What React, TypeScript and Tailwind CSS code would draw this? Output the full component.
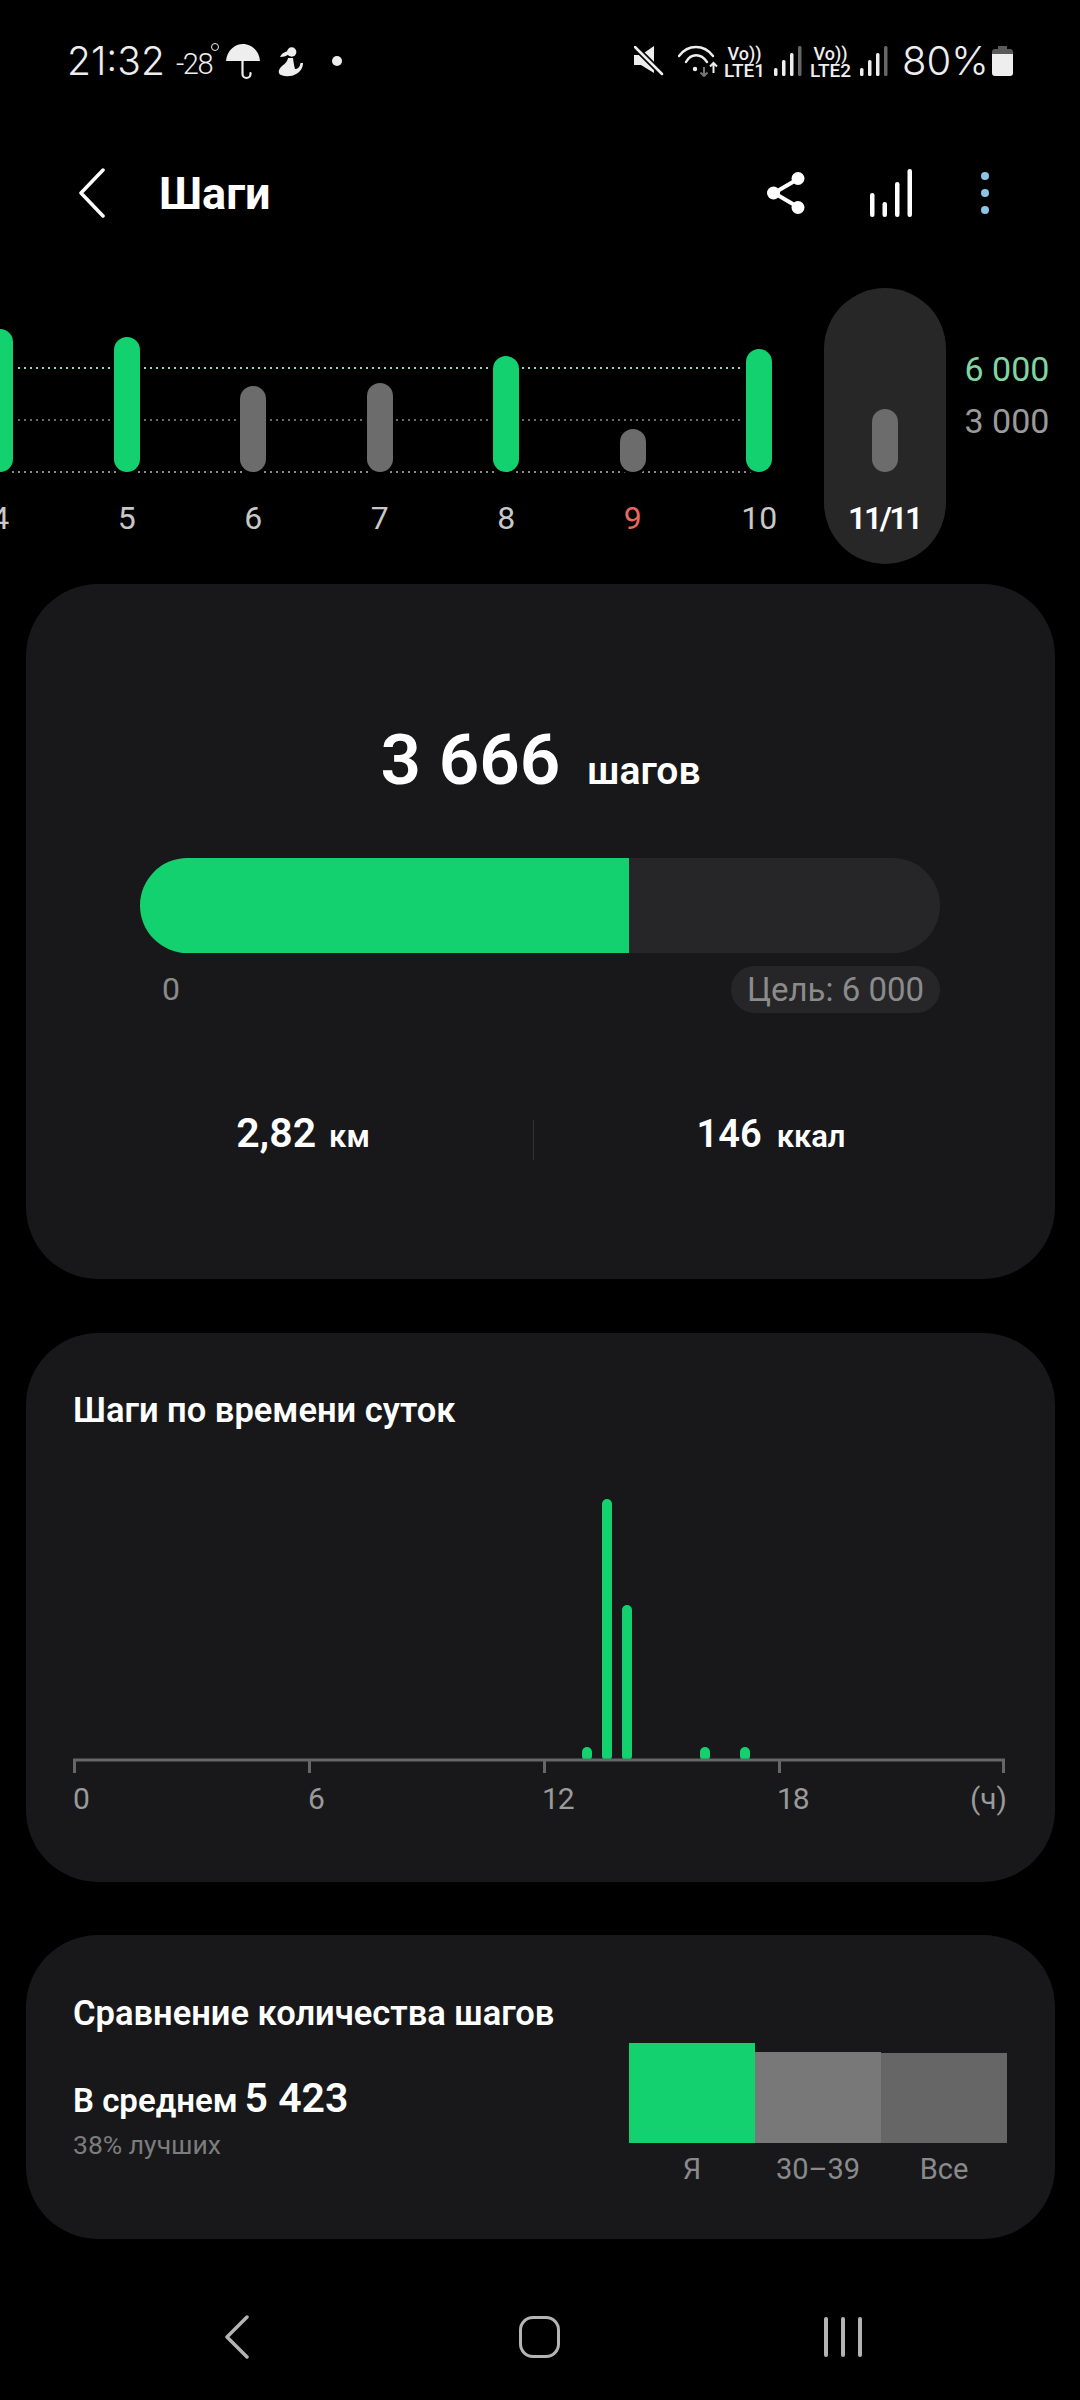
const days = [
  { label: "4", height: 143, color: "bg-[#12d16e]" },
  { label: "5", height: 135, color: "bg-[#12d16e]" },
  { label: "6", height: 86, color: "bg-[#6c6c6c]" },
  { label: "7", height: 89, color: "bg-[#6c6c6c]" },
  { label: "8", height: 116, color: "bg-[#12d16e]" },
  { label: "9", height: 43, color: "bg-[#6c6c6c]", red: true },
  { label: "10", height: 123, color: "bg-[#12d16e]" },
];

const hourBars = [
  { x: 514, top: 0 },
  { x: 534, top: -248 },
  { x: 554, top: -142 },
  { x: 632, top: 0 },
  { x: 672, top: 0 },
];

function Signal() {
  return (
    <svg width="28" height="30" viewBox="0 0 28 30" className="shrink-0">
      <rect x="0" y="22" width="3.5" height="8" rx="1.5" fill="#eee" />
      <rect x="8" y="14" width="3.5" height="16" rx="1.5" fill="#eee" />
      <rect x="16" y="7" width="3.5" height="23" rx="1.5" fill="#eee" />
      <rect x="24" y="0" width="3.5" height="30" rx="1.5" fill="#666" />
    </svg>
  );
}

function Volte({ sim }: { sim: string }) {
  return (
    <div className="flex w-[41px] flex-col items-center text-[#eee]">
      <span className="h-[17px] text-[18px] leading-[17px] font-medium">Vo))</span>
      <span className="mt-[1px] text-[19px] leading-[15px] font-medium">LTE{sim}</span>
    </div>
  );
}

function StatusBar() {
  return (
    <div className="flex h-[122px] items-center justify-between pr-[67px] pl-[67px] text-[#eee]">
      <div className="flex items-center">
        <span className="w-[100px] text-[39px] leading-[44px] font-light font-['Inter',sans-serif]">21:32</span>
        <span className="mt-[6px] ml-[9px] w-[38px] text-[29px] leading-[32px] font-light tracking-[-1.5px]">-28</span>
        <span className="mb-[28px] ml-[-3px] h-[8px] w-[8px] rounded-full border border-[#eee]" />
        <svg width="34" height="36" viewBox="0 0 34 36" className="mt-[2px] ml-[7px]">
          <path d="M0 17C1 6 9 0 17 0S33 6 34 17Z" fill="#eee" />
          <path d="M16.5 15V30a4 4 0 0 0 8 0V29" fill="none" stroke="#eee" strokeWidth="2.2" strokeLinecap="round" />
        </svg>
        <svg width="26" height="30" viewBox="0 0 26 30" className="mt-[2px] ml-[18px]">
          <circle cx="13.7" cy="5" r="4.7" fill="#eee" />
          <path d="M10 4C6 5 3 7 2 10C6 10 9 9 11 7Z" fill="#eee" />
          <path d="M10 11C9 16 6 17 3 20C0 23 0 27 3 28C8 30 14 29.5 18 27C22 25 25 21 25 16L22.5 16C22 20 20 22 17 22C16 18 15.5 15 15 11Z" fill="#eee" />
        </svg>
        <span className="ml-[28px] h-[10px] w-[10px] rounded-full bg-[#eee]" />
      </div>

      <div className="flex items-center">
        <svg width="30" height="30" viewBox="0 0 30 30">
          <path d="M0 9H7L20 0V27L7 19H0Z" fill="#eee" />
          <path d="M0 0L29 29" stroke="#000" strokeWidth="6" />
          <path d="M1 1L28 28" stroke="#eee" strokeWidth="2.5" strokeLinecap="round" />
        </svg>
        <svg width="40" height="32" viewBox="0 0 40 32" className="ml-[14px]">
          <path d="M1 11C10 -1 26 -1 35 11" fill="none" stroke="#eee" strokeWidth="2.4" strokeLinecap="round" />
          <path d="M8 17C13 8 23 8 29 17" fill="none" stroke="#eee" strokeWidth="2.4" strokeLinecap="round" />
          <circle cx="17" cy="24" r="2.2" fill="#eee" />
          <path d="M26 22V31M22.5 27.5L26 31L29.5 27.5" fill="none" stroke="#777" strokeWidth="2" />
          <path d="M35.5 28V18M32 21.5L35.5 18L39 21.5" fill="none" stroke="#eee" strokeWidth="2" />
        </svg>
        <div className="ml-[6px]">
          <Volte sim="1" />
        </div>
        <div className="ml-[9px]">
          <Signal />
        </div>
        <div className="ml-[8px]">
          <Volte sim="2" />
        </div>
        <div className="ml-[9px]">
          <Signal />
        </div>
        <span className="ml-[14px] w-[86px] text-[40px] leading-[44px] font-light font-['Inter',sans-serif]">80%</span>
        <svg width="21" height="30" viewBox="0 0 21 30" className="ml-[4px]">
          <path d="M6 0H15V3H18Q21 3 21 6V8H0V6Q0 3 3 3H6Z" fill="#5a5a5a" />
          <path d="M0 8H21V27Q21 30 18 30H3Q0 30 0 27Z" fill="#eee" />
        </svg>
      </div>
    </div>
  );
}

function Header() {
  return (
    <div className="flex h-[142px] items-center pr-[90px] pl-[79px]">
      <svg width="26" height="50" viewBox="0 0 26 50">
        <path d="M24 2L2 25L24 48" fill="none" stroke="#fff" strokeWidth="3.5" strokeLinecap="round" strokeLinejoin="round" />
      </svg>
      <h1 className="mt-[2px] ml-[54px] flex-1 text-[45px] leading-[50px] font-bold text-white">Шаги</h1>
      <svg width="38" height="42" viewBox="0 0 38 42">
        <path d="M31 7L7 21L31 35" fill="none" stroke="#fff" strokeWidth="4" />
        <circle cx="31" cy="6.5" r="6.5" fill="#fff" />
        <circle cx="6.5" cy="21" r="6.5" fill="#fff" />
        <circle cx="31" cy="35.5" r="6.5" fill="#fff" />
      </svg>
      <svg width="42" height="48" viewBox="0 0 42 48" className="ml-[65px]">
        <rect x="0" y="24" width="4.5" height="24" rx="2.2" fill="#fff" />
        <rect x="12.5" y="33" width="4.5" height="15" rx="2.2" fill="#fff" />
        <rect x="25" y="13" width="4.5" height="35" rx="2.2" fill="#fff" />
        <rect x="37.5" y="0" width="4.5" height="48" rx="2.2" fill="#fff" />
      </svg>
      <svg width="10" height="44" viewBox="0 0 10 44" className="ml-[68px]">
        <circle cx="5" cy="5" r="4" fill="#8ec4e6" />
        <circle cx="5" cy="22" r="4" fill="#8ec4e6" />
        <circle cx="5" cy="39" r="4" fill="#8ec4e6" />
      </svg>
    </div>
  );
}

function WeekChart() {
  return (
    <div className="relative ml-[-63px] flex h-[320px] pt-[24px]">
      <div className="absolute top-[103px] left-[63px] h-[2px] w-[758px] bg-[repeating-linear-gradient(90deg,#8fdcae_0_2px,transparent_2px_6px)]" />
      <div className="absolute top-[155px] left-[63px] h-[2px] w-[758px] bg-[repeating-linear-gradient(90deg,#6a6a6a_0_2px,transparent_2px_6px)]" />
      <div className="absolute top-[207px] left-[63px] h-[2px] w-[758px] bg-[repeating-linear-gradient(90deg,#8a8a8a_0_2px,transparent_2px_6px)]" />

      {days.map((day) => (
        <div key={day.label} className="relative flex w-[126.5px] flex-col items-center">
          <div className="flex h-[184px] items-end">
            <div className={`w-[26px] rounded-full shadow-[0_0_0_3px_#000] ${day.color}`} style={{ height: day.height }} />
          </div>
          <span className={`mt-[26px] text-[32px] leading-[40px] ${day.red ? "text-[#e8695f]" : "text-[#c8c8c8]"}`}>
            {day.label}
          </span>
        </div>
      ))}

      <div className="ml-[1px] flex h-[276px] w-[122px] flex-col items-center rounded-full bg-[#272727]">
        <div className="flex h-[184px] items-end">
          <div className="h-[63px] w-[26px] rounded-full bg-[#6c6c6c]" />
        </div>
        <span className="mt-[26px] text-[32px] leading-[40px] font-semibold tracking-[-2.5px] text-white">11/11</span>
      </div>

      <div className="ml-[19px] flex flex-col pt-[55px] text-[34px] leading-[52px]">
        <span className="text-[#7fd6a0]">6 000</span>
        <span className="text-[#9a9a9a]">3 000</span>
      </div>
    </div>
  );
}

function StepsCard() {
  return (
    <section className="mr-[25px] ml-[26px] flex h-[695px] flex-col rounded-[72px] bg-[#18181a] px-[47px] pt-[136px]">
      <div className="flex h-[80px] items-baseline justify-center text-white">
        <span className="text-[71px] leading-[80px] font-semibold">3 666</span>
        <span className="ml-[27px] text-[39px] font-semibold">шагов</span>
      </div>

      <div className="mt-[58px] mr-[68px] ml-[67px] flex h-[95px] overflow-hidden rounded-full bg-[#262628]">
        <div className="w-[489px] bg-[#12d16e]" />
      </div>

      <div className="mt-[13px] mr-[68px] ml-[67px] flex h-[47px] items-center justify-between">
        <span className="mb-[2px] ml-[22px] text-[32px] text-[#8a8a8a]">0</span>
        <span className="w-[209px] rounded-full bg-[#262628] text-center text-[33px] leading-[47px] text-[#8b8b8b]">Цель: 6 000</span>
      </div>

      <div className="mt-[107px] flex h-[40px] items-center text-white">
        <div className="flex w-[460px] items-baseline justify-center pb-[12px]">
          <span className="text-[41px] font-semibold">2,82</span>
          <span className="ml-[13px] text-[31px] font-semibold">км</span>
        </div>
        <div className="h-[40px] w-px bg-[#333]" />
        <div className="flex flex-1 items-baseline justify-center pb-[12px]">
          <span className="text-[38px] font-semibold">146</span>
          <span className="ml-[15px] text-[31px] font-semibold">ккал</span>
        </div>
      </div>
    </section>
  );
}

function HoursCard() {
  return (
    <section className="mt-[54px] mr-[25px] ml-[26px] h-[549px] rounded-[72px] bg-[#18181a] px-[47px] pt-[57px]">
      <h2 className="text-[34.5px] leading-[40px] font-semibold text-white">Шаги по времени суток</h2>
      <svg width="934" height="280" viewBox="0 0 934 280" className="mt-[67px] block">
        {hourBars.map((bar) => (
          <rect key={bar.x} x={bar.x - 5} y={bar.top + 250} width="10" height={14 - bar.top} rx="5" fill="#12d16e" />
        ))}
        <path d="M1.5 276V263H930.5V276M236.5 263V276M471.5 263V276M706.5 263V276" fill="none" stroke="#666" strokeWidth="3" />
      </svg>
      <div className="mt-[2px] flex text-[30px] leading-[40px] text-[#9a9a9a]">
        <span className="w-[235px]">0</span>
        <span className="w-[235px]">6</span>
        <span className="ml-[-1px] w-[235px] tracking-[-1px]">12</span>
        <span className="flex-1 tracking-[-1px]">18</span>
        <span className="mr-[1px]">(ч)</span>
      </div>
    </section>
  );
}

function CompareCard() {
  return (
    <section className="mt-[53px] mr-[25px] ml-[26px] h-[304px] rounded-[72px] bg-[#18181a] pt-[58px] pr-[48px] pl-[47px]">
      <h2 className="text-[34.5px] leading-[40px] font-semibold text-white">Сравнение количества шагов</h2>
      <div className="flex justify-between">
        <div className="pt-[35px]">
          <div className="flex h-[46px] items-baseline text-white">
            <span className="text-[33px] font-semibold">В среднем</span>
            <span className="ml-[7px] text-[41px] font-semibold">5 423</span>
          </div>
          <p className="mt-[15px] text-[26.5px] leading-[32px] text-[#7c7c7c]">38% лучших</p>
        </div>
        <div className="w-[378px] pt-[10px]">
          <div className="flex h-[100px] items-end">
            <div className="h-[100px] flex-1 bg-[#12d16e]" />
            <div className="h-[91px] flex-1 bg-[#787878]" />
            <div className="h-[90px] flex-1 bg-[#666]" />
          </div>
          <div className="mt-[6px] flex text-center text-[29px] leading-[40px] text-[#8a8a8a]">
            <span className="flex-1">Я</span>
            <span className="flex-1">30–39</span>
            <span className="flex-1">Все</span>
          </div>
        </div>
      </div>
    </section>
  );
}

function NavBar() {
  return (
    <div className="mt-[76px] grid h-[42px] grid-cols-3 px-[86px]">
      <div className="flex items-center justify-center">
        <svg width="24" height="44" viewBox="0 0 24 44">
          <path d="M22 2L2 22L22 42" fill="none" stroke="#b4b4b4" strokeWidth="3.5" strokeLinecap="round" strokeLinejoin="round" />
        </svg>
      </div>
      <div className="flex items-center justify-center">
        <div className="h-[42px] w-[41px] rounded-[14px] border-[3.5px] border-[#b4b4b4]" />
      </div>
      <div className="flex items-center justify-center gap-[13px]">
        <div className="h-[40px] w-[4px] rounded-full bg-[#b4b4b4]" />
        <div className="h-[40px] w-[4px] rounded-full bg-[#b4b4b4]" />
        <div className="h-[40px] w-[4px] rounded-full bg-[#b4b4b4]" />
      </div>
    </div>
  );
}

export default function App() {
  return (
    <main className="h-[2400px] w-[1080px] overflow-hidden bg-black font-['Roboto',sans-serif]">
      <StatusBar />
      <Header />
      <WeekChart />
      <StepsCard />
      <HoursCard />
      <CompareCard />
      <NavBar />
    </main>
  );
}
